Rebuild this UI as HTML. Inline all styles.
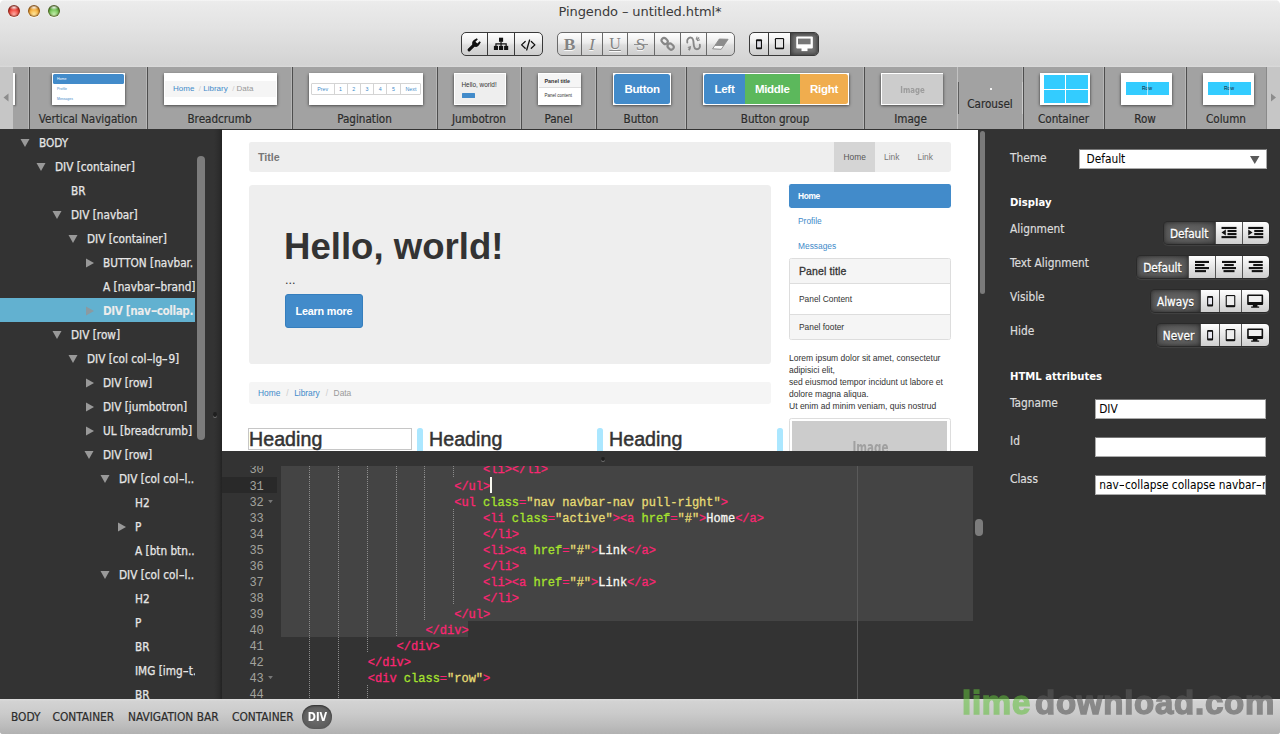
<!DOCTYPE html>
<html><head><meta charset="utf-8"><title>Pingendo</title>
<style>
*{box-sizing:border-box;margin:0;padding:0}
html{width:1280px;height:734px;overflow:hidden;background:#fff}
body{width:1280px;height:734px;overflow:hidden;background:linear-gradient(#eee 0,#eee 20px,#333 20px,#333 715px,#b4b4b4 715px);border-radius:5px 5px 3px 3px}
body{position:relative;font-family:"DejaVu Sans Condensed","DejaVu Sans","Liberation Sans",sans-serif;font-size:12px;color:#ddd}
.abs{position:absolute}
/* ---------- title bar ---------- */
#titlebar{position:absolute;left:0;top:0;width:1280px;height:67px;background:linear-gradient(#f8f8f8 0,#ececec 2%,#ebebeb 4%,#e3e3e3 40%,#d3d3d3 97%,#dadada 100%);}
#titlebar .tl{position:absolute;top:5px;width:12px;height:12px;border-radius:50%;box-shadow:inset 0 0 1.5px 1px rgba(60,20,0,.6),0 1px 0 rgba(255,255,255,.6)}
#title{position:absolute;left:0;width:1280px;top:3.5px;text-align:center;font-family:"DejaVu Sans",sans-serif;font-size:13px;color:#3a3a3a;line-height:16px;letter-spacing:-0.1px}
.tbgroup{position:absolute;top:32px;height:24px;border:1px solid #3a3a3a;border-radius:5px;background:linear-gradient(#fefefe,#ececec 45%,#dedede 55%,#cdcdcd);display:flex;overflow:hidden}
.tbgroup>div{height:100%;border-right:1px solid #3a3a3a;position:relative}
.tbgroup>div:last-child{border-right:0}
.tbgroup.dis{border-color:#6a6a6a}
.tbgroup.dis>div{border-color:#6a6a6a}
/* ---------- strip ---------- */
#strip{position:absolute;left:0;top:67px;width:1280px;height:62px;background:#a2a2a2}

/* toolbar icons */
.tbgroup svg{position:absolute;left:0;top:.7px}
.tbgroup .ser{position:absolute;left:0;right:0;top:0;text-align:center;font-family:"Liberation Serif",serif;font-size:17.5px;line-height:22px;color:#838383;text-shadow:0 1px 0 rgba(255,255,255,.9)}
.tbgroup .on{background:#737373;box-shadow:inset 0 0 4px 1px #3a3a3a}
/* strip cells */
.cell{position:absolute;top:0;height:62px;border-left:1px solid #4e4e4e;box-shadow:-1px 0 0 #b6b6b6}
.cell .lbl{position:absolute;left:-1px;right:0;top:44.5px;text-align:center;font-size:11.6px;line-height:14px;color:#2a2a2a;text-shadow:0 1px 0 rgba(255,255,255,.15);white-space:nowrap;-webkit-text-stroke:.2px #2a2a2a}
.th{position:absolute;margin-left:-1px;top:6px;height:32px;background:#fff;box-shadow:0 .5px 3px rgba(0,0,0,.7);overflow:hidden;font-family:"Liberation Sans",sans-serif}
.pc{height:10.5px;border-left:.6px solid #d4d4d4}
.dot{width:4.4px;height:4.4px;border-radius:50%;background:#1f1f1f;box-shadow:0 1px 0 #707070}
.arr{position:absolute;top:0;height:62px;width:13px;background:#c6c6c6}
/* ---------- left ---------- */
#left{position:absolute;left:0;top:129px;width:222px;height:571px;background:#333;overflow:hidden}

/* tree */
.row{position:absolute;left:0;width:195px;height:24px;line-height:24px;white-space:nowrap;overflow:hidden;font-size:11.7px;color:#e6e6e6}
.row.sel{background:#62b1d0;color:#ececec;font-weight:bold}
.row.sel span{-webkit-text-stroke:0;letter-spacing:-.42px}
.row span{position:absolute;top:.5px;-webkit-text-stroke:.25px currentColor}
.hy{font-style:normal;display:inline-block;transform:scaleX(1.6);margin:0 1.2px}
.row svg{position:absolute;top:7.5px}
/* ---------- preview ---------- */
#preview{position:absolute;left:222px;top:130px;width:756px;height:320.5px;background:#fff;overflow:hidden;font-family:"Liberation Sans",sans-serif;color:#333}

#preview .t{position:absolute;white-space:nowrap}
#preview .hd{font-size:19.6px;line-height:24px;color:#333;-webkit-text-stroke:.5px #333;letter-spacing:.05px}
#preview .bar{top:298px;width:5.4px;height:30px;border-radius:2.5px;background:#abe7ff}
#preview .s{font-size:8.4px;line-height:12px}
/* ---------- code ---------- */
#code{position:absolute;left:222px;top:466px;width:763px;height:232.5px;background:#333;overflow:hidden;font-family:"Liberation Mono",monospace;font-size:12px}

#code .ln{position:absolute;left:0;width:41.8px;text-align:right;height:16px;line-height:16px;color:#a3a39e;font-size:12px}
#code .cl{position:absolute;left:59.4px;height:16px;line-height:16.6px;white-space:pre;color:#f8f8f2;font-size:12px;-webkit-text-stroke:.3px currentColor}
#code .p{color:#f92672}#code .g{color:#a6e22e}#code .y{color:#e6db74}
#code .ig{position:absolute;width:1px;background:repeating-linear-gradient(to bottom,#8c8c8c 0,#8c8c8c 1px,transparent 1px,transparent 2px)}
#code .fold{position:absolute;left:46px;width:5px;height:3.2px}
/* ---------- right ---------- */
#right{position:absolute;left:985px;top:129px;width:295px;height:571px;background:#333}

#right .l{position:absolute;left:25px;font-size:11.8px;line-height:16px;color:#dcdcdc;white-space:nowrap;-webkit-text-stroke:.2px #dcdcdc}
#right .l.b{font-weight:bold;color:#fff;font-size:11.2px;-webkit-text-stroke:0}
#right .inp{position:absolute;background:#fff;border:1px solid #aaa;border-top-color:#777;height:20px;color:#000;font-size:11.8px;line-height:18.5px;padding-left:3.2px;white-space:nowrap;overflow:hidden}
.bg{position:absolute;height:22px;border-radius:4px;display:flex;overflow:hidden;box-shadow:0 0 0 1px #2a2a2a,0 1px 1px 1px rgba(255,255,255,.08)}
.bg>div{height:22px;position:relative;background:linear-gradient(#fefefe,#e6e6e6 50%,#cfcfcf);border-left:1px solid #555}
.bg>div.act{background:radial-gradient(ellipse at center,#646464 0,#5a5a5a 60%,#4c4c4c 100%);border-left:0;color:#fff;font-size:11.7px;line-height:25px;text-align:center;text-shadow:0 1px 1px rgba(0,0,0,.6);box-shadow:inset 0 0 4px rgba(0,0,0,.5);-webkit-text-stroke:.3px #fff}
.bg svg{position:absolute;left:0;top:0}
/* ---------- bottom ---------- */
#bottom{position:absolute;left:0;top:699.4px;width:1280px;height:35px;background:linear-gradient(#dedede 0,#d3d3d3 6%,#cbcbcb 40%,#bdbdbd 75%,#b1b1b1 100%)}
.bl{position:absolute;top:10px;font-size:11.8px;line-height:16px;color:#2c2c2c;white-space:nowrap;-webkit-text-stroke:.2px #2c2c2c}
#wm{position:absolute;left:962px;top:-16px;font-family:"Liberation Sans",sans-serif;font-weight:bold;font-size:33px;line-height:40px;letter-spacing:.75px;white-space:nowrap}
</style></head>
<body>
<div id="titlebar">
  <div class="tl" style="left:8px;background:radial-gradient(ellipse 42% 22% at 50% 20%,rgba(255,255,255,.9),rgba(255,255,255,0)),radial-gradient(circle at 50% 78%,#ffb0a8 0,#f4544a 40%,#cf2e28 62%,#7c1612 96%)"></div>
  <div class="tl" style="left:28px;background:radial-gradient(ellipse 42% 22% at 50% 20%,rgba(255,255,255,.9),rgba(255,255,255,0)),radial-gradient(circle at 50% 78%,#ffe9a0 0,#f8b84a 40%,#d98e22 62%,#7a4c0a 96%)"></div>
  <div class="tl" style="left:48px;background:radial-gradient(ellipse 42% 22% at 50% 20%,rgba(255,255,255,.9),rgba(255,255,255,0)),radial-gradient(circle at 50% 78%,#c8efb0 0,#7fcb62 40%,#52a238 62%,#235a16 96%)"></div>
  <div id="title">Pingendo – untitled.html*</div>

  <div class="tbgroup" style="left:461px;width:82px">
    <div style="width:26px"><svg width="25" height="21" viewBox="0.5 0 25 21"><g transform="translate(12.6,10.9) rotate(45)"><rect x="-1.55" y="-2" width="3.1" height="10.6" rx="1.5" fill="#111"/><path d="M-3.7,-3.4 a3.8,3.8 0 1 0 7.4,0 l-0.9,-3.3 l-1.5,0.2 l0,3.3 l-2.6,0 l0,-3.3 l-1.5,-0.2z" fill="#111"/></g></svg></div>
    <div style="width:27px"><svg width="26" height="21" viewBox="0 0 26 21"><g fill="#111"><rect x="11" y="3.7" width="4.1" height="4.1"/><rect x="5.9" y="11.9" width="4.1" height="4.1"/><rect x="11" y="11.9" width="4.1" height="4.1"/><rect x="16.1" y="11.9" width="4.1" height="4.1"/></g><path d="M13.05 7.5v4.6M7.95 12v-2.2h10.2v2.2" stroke="#111" stroke-width="1.2" fill="none"/></svg></div>
    <div style="width:27px"><svg width="26" height="21" viewBox="0 0 26 21"><path d="M10.2 7.5L6.6 10.9l3.6 3.4M16.3 7.5l3.6 3.4-3.6 3.4M14.6 6l-2.9 10" stroke="#111" stroke-width="1.3" fill="none" stroke-linecap="round" stroke-linejoin="round"/></svg></div>
  </div>
  <div class="tbgroup dis" style="left:557px;width:178px">
    <div style="width:24px"><div class="ser" style="font-weight:bold">B</div></div>
    <div style="width:21px"><div class="ser" style="font-style:italic">I</div></div>
    <div style="width:25px"><div class="ser" style="text-decoration:underline;font-size:16px">U</div></div>
    <div style="width:27px"><div class="ser" style="font-size:17.5px;left:-1px">S</div><div class="abs" style="left:6px;top:10.7px;width:14px;height:1.2px;background:#8f8f8f"></div></div>
    <div style="width:26px"><svg width="25" height="22" viewBox="0 0 25 22"><g transform="translate(12.65,9.8) rotate(43)" fill="none" stroke="#878787" stroke-width="2.1"><rect x="-7.4" y="-2.5" width="6.6" height="5" rx="2.5"/><rect x="0.8" y="-2.5" width="6.6" height="5" rx="2.5"/></g></svg></div>
    <div style="width:26px"><svg width="25" height="22" viewBox="0 0 25 22"><path d="M6.3,8.5 C5.3,5.6 7.8,3.3 10,3.6 C12,3.9 12.5,6 12.6,9.5 C12.8,13 14,15.3 16,15.3 C18,15.3 19.4,13.5 18.8,10.8" fill="none" stroke="#878787" stroke-width="1.9" stroke-linecap="round"/><path d="M15,5.4L16.2,2.6M16,6.8L19,5.7M15.6,6L18.2,3.5M10,12.5L6.8,13.5M9.5,13.9L8.2,16.6M9.7,13.2L7.2,15.7" stroke="#878787" stroke-width="1.1"/></svg></div>
    <div style="width:27px"><svg width="27" height="22" viewBox="0 0 27 22"><path d="M8.1,11.2L16.9,11.4L14.2,15.3L5.6,14.8z" fill="#fafafa" stroke="#878787" stroke-width=".9" stroke-linejoin="round"/><path d="M12.3,5L21.1,5.3L16.9,11.4L8.1,11.2z" fill="#8c8c8c" stroke="#8c8c8c" stroke-width=".9" stroke-linejoin="round"/></svg></div>
  </div>
  <div class="tbgroup" style="left:749px;width:70px">
    <div style="width:19px"><svg width="18" height="22" viewBox="0 0 18 22"><rect x="6" y="5.3" width="6" height="10" rx="1" fill="#111"/><rect x="7.1" y="7.2" width="3.8" height="6.2" fill="#dcdce4"/></svg></div>
    <div style="width:22px"><svg width="21" height="22" viewBox="0 0 21 22"><rect x="5.9" y="4" width="9.2" height="11.3" rx="1.2" fill="#111"/><rect x="7" y="5.1" width="7" height="8.5" fill="#e6e6e6"/></svg></div>
    <div class="on" style="width:27px"><svg width="27" height="22" viewBox="0 0 27 22"><rect x="5.25" y="2.4" width="16.6" height="12.2" rx="1" fill="#fff"/><rect x="10.5" y="14" width="6" height="3.1" fill="#fff"/><rect x="7" y="4.6" width="12.6" height="5.7" fill="#777"/></svg></div>
  </div>
</div>
<div id="strip">
  <div class="arr" style="left:0"><svg width="13" height="61" viewBox="0 0 13 61" style="position:absolute;left:0;top:0"><path d="M8.5 26.5v8l-5-4z" fill="#8c8c8c"/></svg></div>
  <div class="abs" style="left:13px;top:6px;width:1.5px;height:32px;background:#fff;box-shadow:1px 1px 2px rgba(0,0,0,.4)"></div>
  <div class="cell" style="left:29px;width:118px"><div class="th" style="left:23px;width:73px">
      <div class="abs" style="left:1px;top:1px;width:71px;height:10px;background:#428bca;border-radius:1.5px"></div>
      <div class="abs" style="left:5px;top:4px;font-size:3.5px;line-height:5px;color:#fff">Home</div>
      <div class="abs" style="left:5px;top:14px;font-size:3.5px;line-height:5px;color:#428bca">Profile</div>
      <div class="abs" style="left:5px;top:24px;font-size:3.5px;line-height:5px;color:#428bca">Messages</div>
    </div><div class="lbl">Vertical Navigation</div></div>
  <div class="cell" style="left:147px;width:145px"><div class="th" style="left:17px;width:113px">
      <div class="abs" style="left:1px;top:8px;width:111px;height:16px;background:#f5f5f5"></div>
      <div class="abs" style="left:9px;top:11px;font-size:8px;line-height:10px;color:#ccc;white-space:pre"><span style="color:#428bca">Home</span>  / <span style="color:#428bca">Library</span>  / <span style="color:#999">Data</span></div>
    </div><div class="lbl">Breadcrumb</div></div>
  <div class="cell" style="left:292px;width:145px"><div class="th" style="left:17px;width:114px">
      <div class="abs" style="left:2px;top:10px;width:110px;height:12px;border:.6px solid #d4d4d4;border-radius:1px;font-size:5.3px;line-height:10.5px;color:#428bca;white-space:nowrap;text-align:center">
        <span class="abs" style="left:0;width:21.5px;height:11px">Prev</span><span class="abs pc" style="left:21.5px;width:13.2px">1</span><span class="abs pc" style="left:34.7px;width:13.2px">2</span><span class="abs pc" style="left:47.9px;width:13.2px">3</span><span class="abs pc" style="left:61.1px;width:13.2px">4</span><span class="abs pc" style="left:74.3px;width:13.2px">5</span><span class="abs pc" style="left:87.5px;width:22px">Next</span></div>
    </div><div class="lbl">Pagination</div></div>
  <div class="cell" style="left:437px;width:84px"><div class="th" style="left:17px;width:52px">
      <div class="abs" style="left:1px;top:1px;width:50px;height:30px;background:#eee"></div>
      <div class="abs" style="left:7.5px;top:8px;font-size:6.4px;line-height:8px;color:#333;white-space:nowrap">Hello, world!</div>
      <div class="abs" style="left:7.5px;top:19.5px;width:13px;height:5px;background:#428bca;border-radius:.5px"></div>
    </div><div class="lbl">Jumbotron</div></div>
  <div class="cell" style="left:521px;width:75px"><div class="th" style="left:16.5px;width:43.5px">
      <div class="abs" style="left:1px;top:1px;width:42px;height:14px;background:#f5f5f5;border-bottom:.5px solid #ddd"></div>
      <div class="abs" style="left:7px;top:5px;font-size:5.4px;line-height:7px;font-weight:bold;color:#333;white-space:nowrap">Panel title</div>
      <div class="abs" style="left:7px;top:20px;font-size:4.5px;line-height:6px;color:#333;white-space:nowrap">Panel content</div>
    </div><div class="lbl">Panel</div></div>
  <div class="cell" style="left:596px;width:90px"><div class="th" style="left:17px;width:58px">
      <div class="abs" style="left:1px;top:1px;width:56px;height:30px;background:#428bca;border-radius:2.5px;color:#fff;font-weight:bold;font-size:11.5px;line-height:30px;text-align:center;letter-spacing:-.3px">Button</div>
    </div><div class="lbl">Button</div></div>
  <div class="cell" style="left:686px;width:178px"><div class="th" style="left:17px;width:146px">
      <div class="abs" style="left:1px;top:1px;width:144px;height:30px;border-radius:2.5px;overflow:hidden;color:#fff;font-weight:bold;font-size:11.5px;line-height:30px;text-align:center;letter-spacing:-.3px">
        <div class="abs" style="left:0;width:41px;height:30px;background:#428bca">Left</div><div class="abs" style="left:41px;width:54.5px;height:30px;background:#5cb85c">Middle</div><div class="abs" style="left:95.5px;width:49px;height:30px;background:#f0ad4e">Right</div></div>
    </div><div class="lbl">Button group</div></div>
  <div class="cell" style="left:864px;width:93px"><div class="th" style="left:16.5px;width:62.5px">
      <div class="abs" style="left:1px;top:1px;width:61px;height:30px;background:#ccc;color:#9c9c9c;font-family:'DejaVu Sans Condensed',sans-serif;font-weight:bold;font-size:9.3px;line-height:32.5px;text-align:center"><span style="display:inline-block;transform:scaleX(.84);margin-left:2px">Image</span></div>
    </div><div class="lbl">Image</div></div>
  <div class="cell" style="left:957px;width:66px;border-left-color:#c2c2c2;box-shadow:none">
      <div class="abs" style="left:0;top:15px;width:1.3px;height:32px;background:#5e5e5e"></div>
      <div class="abs" style="right:0;top:15px;width:1px;height:32px;background:#cdcdcd;z-index:2"></div>
      <div class="abs" style="left:32px;top:21px;width:2px;height:2px;background:#f4f4f4"></div>
      <div class="lbl" style="top:29.5px">Carousel</div></div>
  <div class="cell" style="left:1023px;width:81px"><div class="th" style="left:17px;width:50px">
      <div class="abs" style="left:4px;top:2px;width:21px;height:14px;background:#33ccff"></div><div class="abs" style="left:26px;top:2px;width:21.5px;height:14px;background:#33ccff"></div>
      <div class="abs" style="left:4px;top:17.2px;width:21px;height:12.5px;background:#33ccff"></div><div class="abs" style="left:26px;top:17.2px;width:21.5px;height:12.5px;background:#33ccff"></div>
    </div><div class="lbl">Container</div></div>
  <div class="cell" style="left:1104px;width:82px"><div class="th" style="left:17px;width:51px">
      <div class="abs" style="left:4.5px;top:9.3px;width:43px;height:13px;background:#33ccff;font-size:5px;line-height:12.5px;text-align:center;color:#123">Row</div>
      <div class="abs" style="left:25.5px;top:9.3px;width:.6px;height:13px;background:rgba(255,255,255,.6)"></div>
    </div><div class="lbl">Row</div></div>
  <div class="cell" style="left:1186px;width:81px;border-right:1px solid #8a8a8a"><div class="th" style="left:17px;width:51px">
      <div class="abs" style="left:4.5px;top:9.3px;width:43px;height:13px;background:#33ccff;font-size:5px;line-height:12.5px;text-align:center;color:#123">Row</div>
      <div class="abs" style="left:25.5px;top:9.3px;width:.6px;height:13px;background:rgba(255,255,255,.6)"></div>
    </div><div class="lbl">Column</div></div>
  <div class="arr" style="left:1267px"><svg width="13" height="61" viewBox="0 0 13 61" style="position:absolute;left:0;top:0"><path d="M4 26.5v8l5-4z" fill="#8c8c8c"/></svg></div>
</div>
<div id="left">
  <div class="row" style="top:1px"><svg width="10" height="10" viewBox="0 0 10 10" style="left:20px"><path d="M0.5 1h9l-4.5 8z" fill="#999"/></svg><span style="left:39px">BODY</span></div>
  <div class="row" style="top:25px"><svg width="10" height="10" viewBox="0 0 10 10" style="left:36px"><path d="M0.5 1h9l-4.5 8z" fill="#999"/></svg><span style="left:55px">DIV [container]</span></div>
  <div class="row" style="top:49px"><span style="left:71px">BR</span></div>
  <div class="row" style="top:73px"><svg width="10" height="10" viewBox="0 0 10 10" style="left:52px"><path d="M0.5 1h9l-4.5 8z" fill="#999"/></svg><span style="left:71px">DIV [navbar]</span></div>
  <div class="row" style="top:97px"><svg width="10" height="10" viewBox="0 0 10 10" style="left:68px"><path d="M0.5 1h9l-4.5 8z" fill="#999"/></svg><span style="left:87px">DIV [container]</span></div>
  <div class="row" style="top:121px"><svg width="10" height="10" viewBox="0 0 10 10" style="left:85px"><path d="M1 0.5v9l8-4.5z" fill="#999"/></svg><span style="left:103px">BUTTON [navbar.</span></div>
  <div class="row" style="top:145px"><span style="left:103px">A [navbar<i class="hy">-</i>brand]</span></div>
  <div class="row sel" style="top:169px"><svg width="10" height="10" viewBox="0 0 10 10" style="left:85px"><path d="M1 0.5v9l8-4.5z" fill="#8b9aa1"/></svg><span style="left:103px">DIV [nav<i class="hy">-</i>collap.</span></div>
  <div class="row" style="top:193px"><svg width="10" height="10" viewBox="0 0 10 10" style="left:52px"><path d="M0.5 1h9l-4.5 8z" fill="#999"/></svg><span style="left:71px">DIV [row]</span></div>
  <div class="row" style="top:217px"><svg width="10" height="10" viewBox="0 0 10 10" style="left:68px"><path d="M0.5 1h9l-4.5 8z" fill="#999"/></svg><span style="left:87px">DIV [col col<i class="hy">-</i>lg<i class="hy">-</i>9]</span></div>
  <div class="row" style="top:241px"><svg width="10" height="10" viewBox="0 0 10 10" style="left:85px"><path d="M1 0.5v9l8-4.5z" fill="#999"/></svg><span style="left:103px">DIV [row]</span></div>
  <div class="row" style="top:265px"><svg width="10" height="10" viewBox="0 0 10 10" style="left:85px"><path d="M1 0.5v9l8-4.5z" fill="#999"/></svg><span style="left:103px">DIV [jumbotron]</span></div>
  <div class="row" style="top:289px"><svg width="10" height="10" viewBox="0 0 10 10" style="left:85px"><path d="M1 0.5v9l8-4.5z" fill="#999"/></svg><span style="left:103px">UL [breadcrumb]</span></div>
  <div class="row" style="top:313px"><svg width="10" height="10" viewBox="0 0 10 10" style="left:84px"><path d="M0.5 1h9l-4.5 8z" fill="#999"/></svg><span style="left:103px">DIV [row]</span></div>
  <div class="row" style="top:337px"><svg width="10" height="10" viewBox="0 0 10 10" style="left:100px"><path d="M0.5 1h9l-4.5 8z" fill="#999"/></svg><span style="left:119px">DIV [col col<i class="hy">-</i>l..</span></div>
  <div class="row" style="top:361px"><span style="left:135px">H2</span></div>
  <div class="row" style="top:385px"><svg width="10" height="10" viewBox="0 0 10 10" style="left:117px"><path d="M1 0.5v9l8-4.5z" fill="#999"/></svg><span style="left:135px">P</span></div>
  <div class="row" style="top:409px"><span style="left:135px">A [btn btn..</span></div>
  <div class="row" style="top:433px"><svg width="10" height="10" viewBox="0 0 10 10" style="left:100px"><path d="M0.5 1h9l-4.5 8z" fill="#999"/></svg><span style="left:119px">DIV [col col<i class="hy">-</i>l..</span></div>
  <div class="row" style="top:457px"><span style="left:135px">H2</span></div>
  <div class="row" style="top:481px"><span style="left:135px">P</span></div>
  <div class="row" style="top:505px"><span style="left:135px">BR</span></div>
  <div class="row" style="top:529px"><span style="left:135px">IMG [img<i class="hy">-</i>t.</span></div>
  <div class="row" style="top:553px"><span style="left:135px">BR</span></div>
  <div class="abs" style="left:197px;top:27px;width:8px;height:284px;border-radius:4px;background:#7c7c7c"></div>
  <div class="abs" style="left:214px;top:0;width:8px;height:571px;background:linear-gradient(to right,rgba(0,0,0,0),rgba(0,0,0,.12) 60%,rgba(0,0,0,.32))"></div>
  <div class="abs dot" style="left:213px;top:283.3px"></div>
</div>
<div id="preview">
  <div class="abs" style="left:27px;top:12px;width:702px;height:30px;background:#eee;border-radius:2.4px"></div>
  <div class="t" style="left:36px;top:19px;font-size:10.7px;line-height:16px;font-weight:bold;color:#777">Title</div>
  <div class="abs" style="left:612px;top:12px;width:41px;height:30px;background:#d5d5d5"></div>
  <div class="t s" style="left:621.5px;top:21px;color:#555">Home</div>
  <div class="t s" style="left:662px;top:21px;color:#777">Link</div>
  <div class="t s" style="left:695.5px;top:21px;color:#777">Link</div>
  <!-- jumbotron -->
  <div class="abs" style="left:27px;top:54.5px;width:522px;height:179px;background:#eee;border-radius:3.6px"></div>
  <div class="t" style="left:62px;top:96.3px;font-size:36.6px;line-height:42px;font-weight:bold;color:#333;letter-spacing:0">Hello, world!</div>
  <div class="t" style="left:63px;top:141px;font-size:12.6px;line-height:19px;color:#333">...</div>
  <div class="abs" style="left:63px;top:164px;width:78px;height:34px;background:#428bca;border-radius:3px;border:1px solid #357ebd"></div>
  <div class="t" style="left:63px;top:164px;width:78px;text-align:center;font-size:10.8px;line-height:34px;color:#fff;font-weight:bold;letter-spacing:-.2px">Learn more</div>
  <!-- breadcrumb -->
  <div class="abs" style="left:27px;top:252px;width:522px;height:21.6px;background:#f5f5f5;border-radius:2.4px"></div>
  <div class="t s" style="left:36px;top:257px;color:#ccc;white-space:pre"><span style="color:#428bca">Home</span><span style="margin:0 5.6px 0 5.9px">/</span><span style="color:#428bca">Library</span><span style="margin:0 5.6px 0 5.9px">/</span><span style="color:#999">Data</span></div>
  <!-- headings -->
  <div class="abs" style="left:26px;top:297.5px;width:164px;height:22.5px;border:1.5px solid #c6c6c6"></div>
  <div class="t hd" style="left:27px;top:297px">Heading</div>
  <div class="t hd" style="left:207px;top:297px">Heading</div>
  <div class="t hd" style="left:387px;top:297px">Heading</div>
  <div class="abs bar" style="left:195.3px"></div><div class="abs bar" style="left:375.3px"></div><div class="abs bar" style="left:555.3px"></div>
  <!-- right col -->
  <div class="abs" style="left:567px;top:54px;width:162px;height:24px;background:#428bca;border-radius:2.4px"></div>
  <div class="t s" style="left:576px;top:60px;color:#fff;font-weight:bold;letter-spacing:-.35px">Home</div>
  <div class="t s" style="left:576px;top:85px;color:#428bca">Profile</div>
  <div class="t s" style="left:576px;top:110px;color:#428bca">Messages</div>
  <div class="abs" style="left:567px;top:128px;width:162px;height:82px;border:1px solid #ddd;border-radius:2.4px;background:#fff;overflow:hidden">
     <div class="abs" style="left:0;top:0;width:160px;height:24.6px;background:#f5f5f5;border-bottom:1px solid #ddd"></div>
     <div class="abs" style="left:0;top:54.6px;width:160px;height:26px;background:#f5f5f5;border-top:1px solid #ddd"></div>
  </div>
  <div class="t" style="left:577px;top:132.7px;font-size:10.5px;line-height:16px;color:#333;-webkit-text-stroke:.3px #333;letter-spacing:.12px">Panel title</div>
  <div class="t s" style="left:577px;top:163px;color:#333">Panel Content</div>
  <div class="t s" style="left:577px;top:191px;color:#333">Panel footer</div>
  <div class="t s" style="left:567px;top:222px;color:#333;white-space:pre;line-height:12px;font-size:8.52px">Lorem ipsum dolor sit amet, consectetur
adipisici elit,
sed eiusmod tempor incidunt ut labore et
dolore magna aliqua.
Ut enim ad minim veniam, quis nostrud</div>
  <div class="abs" style="left:567px;top:288px;width:162px;height:40px;border:1px solid #ddd;border-radius:2.4px;background:#fff"></div>
  <div class="abs" style="left:569.7px;top:291px;width:155.8px;height:40px;background:#ccc"></div>
  <div class="t" style="left:570.5px;top:307.5px;width:155px;text-align:center;font-family:'DejaVu Sans Condensed',sans-serif;font-weight:bold;font-size:15.5px;line-height:20px;color:#a0a0a0;transform:scaleX(.74)">Image</div>
</div>
<div class="abs" style="left:979.5px;top:131px;width:5px;height:163px;border-radius:2.5px;background:#7a7a7a"></div>
<div class="abs dot" style="left:601px;top:456.5px"></div>
<div class="abs" style="left:985px;top:129px;width:8px;height:571px;background:linear-gradient(to left,rgba(0,0,0,0),rgba(0,0,0,.12) 60%,rgba(0,0,0,.32))"></div>
<div class="abs dot" style="left:991px;top:412.3px"></div>
<div id="code">
<div class="abs" style="left:0;top:0;width:55px;height:233px;background:#333"></div>
<div class="abs" style="left:59px;top:0;width:692px;height:155px;background:#444"></div>
<div class="abs" style="left:59px;top:155px;width:187px;height:16px;background:#444"></div>
<div class="abs" style="left:0;top:11px;width:55px;height:15.5px;background:#292929"></div>
<div class="abs" style="left:635px;top:0;width:1px;height:233px;background:#5a5a5a"></div>
<div class="ln" style="top:-4.5px">30</div>
<div class="cl" style="top:-4.5px">                            <span class="p">&lt;li&gt;&lt;/li&gt;</span></div>
<div class="ig" style="left:87.2px;top:-4.5px;height:16px"></div>
<div class="ig" style="left:116.0px;top:-4.5px;height:16px"></div>
<div class="ig" style="left:144.8px;top:-4.5px;height:16px"></div>
<div class="ig" style="left:173.6px;top:-4.5px;height:16px"></div>
<div class="ig" style="left:202.4px;top:-4.5px;height:16px"></div>
<div class="ig" style="left:231.2px;top:-4.5px;height:16px"></div>
<div class="ln" style="top:12.5px">31</div>
<div class="cl" style="top:12.5px">                        <span class="p">&lt;/ul&gt;</span></div>
<div class="ig" style="left:87.2px;top:10.5px;height:16px"></div>
<div class="ig" style="left:116.0px;top:10.5px;height:16px"></div>
<div class="ig" style="left:144.8px;top:10.5px;height:16px"></div>
<div class="ig" style="left:173.6px;top:10.5px;height:16px"></div>
<div class="ig" style="left:202.4px;top:10.5px;height:16px"></div>
<div class="ln" style="top:28.5px">32</div>
<svg class="fold" style="top:33.5px" viewBox="0 0 6 4"><path d="M0 0h6l-3 4z" fill="#777"/></svg>
<div class="cl" style="top:28.5px">                        <span class="p">&lt;ul</span> <span class="g">class</span><span class="p">=</span><span class="y">"nav navbar-nav pull-right"</span><span class="p">&gt;</span></div>
<div class="ig" style="left:87.2px;top:26.5px;height:16px"></div>
<div class="ig" style="left:116.0px;top:26.5px;height:16px"></div>
<div class="ig" style="left:144.8px;top:26.5px;height:16px"></div>
<div class="ig" style="left:173.6px;top:26.5px;height:16px"></div>
<div class="ig" style="left:202.4px;top:26.5px;height:16px"></div>
<div class="ln" style="top:44.5px">33</div>
<div class="cl" style="top:44.5px">                            <span class="p">&lt;li</span> <span class="g">class</span><span class="p">=</span><span class="y">"active"</span><span class="p">&gt;&lt;a</span> <span class="g">href</span><span class="p">=</span><span class="y">"#"</span><span class="p">&gt;</span>Home<span class="p">&lt;/a&gt;</span></div>
<div class="ig" style="left:87.2px;top:42.5px;height:16px"></div>
<div class="ig" style="left:116.0px;top:42.5px;height:16px"></div>
<div class="ig" style="left:144.8px;top:42.5px;height:16px"></div>
<div class="ig" style="left:173.6px;top:42.5px;height:16px"></div>
<div class="ig" style="left:202.4px;top:42.5px;height:16px"></div>
<div class="ig" style="left:231.2px;top:42.5px;height:16px"></div>
<div class="ln" style="top:60.5px">34</div>
<div class="cl" style="top:60.5px">                            <span class="p">&lt;/li&gt;</span></div>
<div class="ig" style="left:87.2px;top:58.5px;height:16px"></div>
<div class="ig" style="left:116.0px;top:58.5px;height:16px"></div>
<div class="ig" style="left:144.8px;top:58.5px;height:16px"></div>
<div class="ig" style="left:173.6px;top:58.5px;height:16px"></div>
<div class="ig" style="left:202.4px;top:58.5px;height:16px"></div>
<div class="ig" style="left:231.2px;top:58.5px;height:16px"></div>
<div class="ln" style="top:76.5px">35</div>
<div class="cl" style="top:76.5px">                            <span class="p">&lt;li&gt;&lt;a</span> <span class="g">href</span><span class="p">=</span><span class="y">"#"</span><span class="p">&gt;</span>Link<span class="p">&lt;/a&gt;</span></div>
<div class="ig" style="left:87.2px;top:74.5px;height:16px"></div>
<div class="ig" style="left:116.0px;top:74.5px;height:16px"></div>
<div class="ig" style="left:144.8px;top:74.5px;height:16px"></div>
<div class="ig" style="left:173.6px;top:74.5px;height:16px"></div>
<div class="ig" style="left:202.4px;top:74.5px;height:16px"></div>
<div class="ig" style="left:231.2px;top:74.5px;height:16px"></div>
<div class="ln" style="top:92.5px">36</div>
<div class="cl" style="top:92.5px">                            <span class="p">&lt;/li&gt;</span></div>
<div class="ig" style="left:87.2px;top:90.5px;height:16px"></div>
<div class="ig" style="left:116.0px;top:90.5px;height:16px"></div>
<div class="ig" style="left:144.8px;top:90.5px;height:16px"></div>
<div class="ig" style="left:173.6px;top:90.5px;height:16px"></div>
<div class="ig" style="left:202.4px;top:90.5px;height:16px"></div>
<div class="ig" style="left:231.2px;top:90.5px;height:16px"></div>
<div class="ln" style="top:108.5px">37</div>
<div class="cl" style="top:108.5px">                            <span class="p">&lt;li&gt;&lt;a</span> <span class="g">href</span><span class="p">=</span><span class="y">"#"</span><span class="p">&gt;</span>Link<span class="p">&lt;/a&gt;</span></div>
<div class="ig" style="left:87.2px;top:106.5px;height:16px"></div>
<div class="ig" style="left:116.0px;top:106.5px;height:16px"></div>
<div class="ig" style="left:144.8px;top:106.5px;height:16px"></div>
<div class="ig" style="left:173.6px;top:106.5px;height:16px"></div>
<div class="ig" style="left:202.4px;top:106.5px;height:16px"></div>
<div class="ig" style="left:231.2px;top:106.5px;height:16px"></div>
<div class="ln" style="top:124.5px">38</div>
<div class="cl" style="top:124.5px">                            <span class="p">&lt;/li&gt;</span></div>
<div class="ig" style="left:87.2px;top:122.5px;height:16px"></div>
<div class="ig" style="left:116.0px;top:122.5px;height:16px"></div>
<div class="ig" style="left:144.8px;top:122.5px;height:16px"></div>
<div class="ig" style="left:173.6px;top:122.5px;height:16px"></div>
<div class="ig" style="left:202.4px;top:122.5px;height:16px"></div>
<div class="ig" style="left:231.2px;top:122.5px;height:16px"></div>
<div class="ln" style="top:140.5px">39</div>
<div class="cl" style="top:140.5px">                        <span class="p">&lt;/ul&gt;</span></div>
<div class="ig" style="left:87.2px;top:138.5px;height:16px"></div>
<div class="ig" style="left:116.0px;top:138.5px;height:16px"></div>
<div class="ig" style="left:144.8px;top:138.5px;height:16px"></div>
<div class="ig" style="left:173.6px;top:138.5px;height:16px"></div>
<div class="ig" style="left:202.4px;top:138.5px;height:16px"></div>
<div class="ln" style="top:156.5px">40</div>
<div class="cl" style="top:156.5px">                    <span class="p">&lt;/div&gt;</span></div>
<div class="ig" style="left:87.2px;top:154.5px;height:16px"></div>
<div class="ig" style="left:116.0px;top:154.5px;height:16px"></div>
<div class="ig" style="left:144.8px;top:154.5px;height:16px"></div>
<div class="ig" style="left:173.6px;top:154.5px;height:16px"></div>
<div class="ln" style="top:172.5px">41</div>
<div class="cl" style="top:172.5px">                <span class="p">&lt;/div&gt;</span></div>
<div class="ig" style="left:87.2px;top:170.5px;height:16px"></div>
<div class="ig" style="left:116.0px;top:170.5px;height:16px"></div>
<div class="ig" style="left:144.8px;top:170.5px;height:16px"></div>
<div class="ln" style="top:188.5px">42</div>
<div class="cl" style="top:188.5px">            <span class="p">&lt;/div&gt;</span></div>
<div class="ig" style="left:87.2px;top:186.5px;height:16px"></div>
<div class="ig" style="left:116.0px;top:186.5px;height:16px"></div>
<div class="ln" style="top:204.5px">43</div>
<svg class="fold" style="top:209.5px" viewBox="0 0 6 4"><path d="M0 0h6l-3 4z" fill="#777"/></svg>
<div class="cl" style="top:204.5px">            <span class="p">&lt;div</span> <span class="g">class</span><span class="p">=</span><span class="y">"row"</span><span class="p">&gt;</span></div>
<div class="ig" style="left:87.2px;top:202.5px;height:16px"></div>
<div class="ig" style="left:116.0px;top:202.5px;height:16px"></div>
<div class="ln" style="top:220.5px">44</div>
<div class="cl" style="top:220.5px">            </div>
<div class="ig" style="left:144.8px;top:218.5px;height:16px"></div>
<div class="ig" style="left:87.2px;top:218.5px;height:16px"></div>
<div class="ig" style="left:116.0px;top:218.5px;height:16px"></div>
<div class="abs" style="left:268px;top:10.5px;width:1.5px;height:16px;background:#f8f8f0"></div>
<div class="abs" style="left:753.2px;top:53px;width:7.8px;height:17.2px;border-radius:3.9px;background:#7c7c7c"></div>
</div>
<div id="right">
<div class="l" style="top:20.7px">Theme</div>
<div class="inp" style="left:94px;top:19.5px;width:187.5px;padding-left:6.5px">Default<svg width="9.5" height="8" viewBox="0 0 11 9" style="position:absolute;right:6px;top:6px"><path d="M0 0h11l-5.5 9z" fill="#5a5a5a"/></svg></div>
<div class="l b" style="top:65.7px">Display</div>
<div class="l" style="top:91.7px">Alignment</div>
<div class="bg" style="left:178.5px;top:93px"><div class="act" style="width:51.2px">Default</div><div style="width:27.8px"><svg width="26" height="22" viewBox="0 0 26 22"><g transform="translate(5.0,0)" fill="#111"><rect x="0.5" y="4.9" width="15" height="2.1"/><rect x="6.5" y="7.96" width="9" height="2.1"/><rect x="6.5" y="11.02" width="9" height="2.1"/><rect x="0.5" y="14.08" width="15" height="2.1"/><path d="M4.8 7.6v6l-4.3-3z"/></g></svg></div><div style="width:26.5px"><svg width="25.5" height="22" viewBox="0 0 25.5 22"><g transform="translate(4.75,0)" fill="#111"><rect x="0.5" y="4.9" width="15" height="2.1"/><rect x="6.5" y="7.96" width="9" height="2.1"/><rect x="6.5" y="11.02" width="9" height="2.1"/><rect x="0.5" y="14.08" width="15" height="2.1"/><path d="M0.5 7.6v6l4.3-3z"/></g></svg></div></div>
<div class="l" style="top:125.7px">Text Alignment</div>
<div class="bg" style="left:151.7px;top:127px"><div class="act" style="width:51.4px">Default</div><div style="width:27.4px"><svg width="26" height="22" viewBox="0 0 26 22"><g transform="translate(5.0,0)" fill="#111"><rect x="1.0" y="4.90" width="14.0" height="2.1"/><rect x="1.0" y="7.96" width="9.5" height="2.1"/><rect x="1.0" y="11.02" width="14.0" height="2.1"/><rect x="1.0" y="14.08" width="11.0" height="2.1"/></g></svg></div><div style="width:27px"><svg width="26" height="22" viewBox="0 0 26 22"><g transform="translate(5.0,0)" fill="#111"><rect x="1.0" y="4.90" width="14.0" height="2.1"/><rect x="3.25" y="7.96" width="9.5" height="2.1"/><rect x="1.0" y="11.02" width="14.0" height="2.1"/><rect x="2.5" y="14.08" width="11.0" height="2.1"/></g></svg></div><div style="width:26.5px"><svg width="25.5" height="22" viewBox="0 0 25.5 22"><g transform="translate(4.75,0)" fill="#111"><rect x="1.0" y="4.90" width="14.0" height="2.1"/><rect x="5.5" y="7.96" width="9.5" height="2.1"/><rect x="1.0" y="11.02" width="14.0" height="2.1"/><rect x="4.0" y="14.08" width="11.0" height="2.1"/></g></svg></div></div>
<div class="l" style="top:159.7px">Visible</div>
<div class="bg" style="left:165.6px;top:161px"><div class="act" style="width:49.7px">Always</div><div style="width:19.2px"><svg width="18.2" height="22" viewBox="0 0 18.2 22"><g transform="translate(6.1,0)"><rect x="0" y="6" width="6" height="10.5" rx="1" fill="#111"/><rect x="1.1" y="7.8" width="3.8" height="6.6" fill="#e9e9f2"/></g></svg></div><div style="width:22px"><svg width="21" height="22" viewBox="0 0 21 22"><g transform="translate(5.7,0)"><rect x="0" y="5" width="9.6" height="12.2" rx="1.2" fill="#111"/><rect x="1.1" y="6.1" width="7.4" height="9" fill="#eee"/></g></svg></div><div style="width:27.3px"><svg width="26.3" height="22" viewBox="0 0 26.3 22"><g transform="translate(5.15,0)"><path d="M1 4.5h14a1,1 0 0 1 1,1v8.5a1,1 0 0 1 -1,1H10.3v1.6h1.7v1.2h-8v-1.2h1.7v-1.6H1a1,1 0 0 1 -1,-1v-8.5a1,1 0 0 1 1,-1z" fill="#111"/><rect x="1.6" y="6" width="12.8" height="6" fill="#f0f0f0"/></g></svg></div></div>
<div class="l" style="top:193.7px">Hide</div>
<div class="bg" style="left:171.8px;top:195px"><div class="act" style="width:43.5px">Never</div><div style="width:19.2px"><svg width="18.2" height="22" viewBox="0 0 18.2 22"><g transform="translate(6.1,0)"><rect x="0" y="6" width="6" height="10.5" rx="1" fill="#111"/><rect x="1.1" y="7.8" width="3.8" height="6.6" fill="#e9e9f2"/></g></svg></div><div style="width:22px"><svg width="21" height="22" viewBox="0 0 21 22"><g transform="translate(5.7,0)"><rect x="0" y="5" width="9.6" height="12.2" rx="1.2" fill="#111"/><rect x="1.1" y="6.1" width="7.4" height="9" fill="#eee"/></g></svg></div><div style="width:27.3px"><svg width="26.3" height="22" viewBox="0 0 26.3 22"><g transform="translate(5.15,0)"><path d="M1 4.5h14a1,1 0 0 1 1,1v8.5a1,1 0 0 1 -1,1H10.3v1.6h1.7v1.2h-8v-1.2h1.7v-1.6H1a1,1 0 0 1 -1,-1v-8.5a1,1 0 0 1 1,-1z" fill="#111"/><rect x="1.6" y="6" width="12.8" height="6" fill="#f0f0f0"/></g></svg></div></div>
<div class="l b" style="top:239.7px">HTML attributes</div>
<div class="l" style="top:265.7px">Tagname</div>
<div class="inp" style="left:110px;top:270px;width:170.7px">DIV</div>
<div class="l" style="top:303.7px">Id</div>
<div class="inp" style="left:110px;top:308px;width:170.7px"></div>
<div class="l" style="top:341.7px">Class</div>
<div class="inp" style="left:110px;top:346px;width:170.7px">nav<i class="hy">-</i>collapse collapse navbar<i class="hy">-</i>responsive<i class="hy">-</i>collapse</div>
</div>
<div id="bottom">
  <div class="bl" style="left:11px">BODY</div><div class="bl" style="left:52.5px">CONTAINER</div><div class="bl" style="left:128px">NAVIGATION BAR</div><div class="bl" style="left:232px">CONTAINER</div>
  <div class="abs" style="left:302px;top:6px;width:30px;height:23.5px;border-radius:12px;background:radial-gradient(ellipse at center,#707070 0,#5c5c5c 70%,#4e4e4e 100%);color:#fff;text-align:center;font-size:11.8px;font-weight:bold;line-height:24.5px;box-shadow:inset 0 1px 2px rgba(0,0,0,.5)"><span style="display:inline-block;transform:scaleX(.92)">DIV</span></div>
  <div id="wm"><span style="color:#62c03c;-webkit-text-stroke:1.4px #62c03c;opacity:.55">lime</span><span style="color:#5a5a5a;-webkit-text-stroke:1.4px #5a5a5a;opacity:.6;margin-left:4px">download.com</span></div>
</div>
</body></html>
